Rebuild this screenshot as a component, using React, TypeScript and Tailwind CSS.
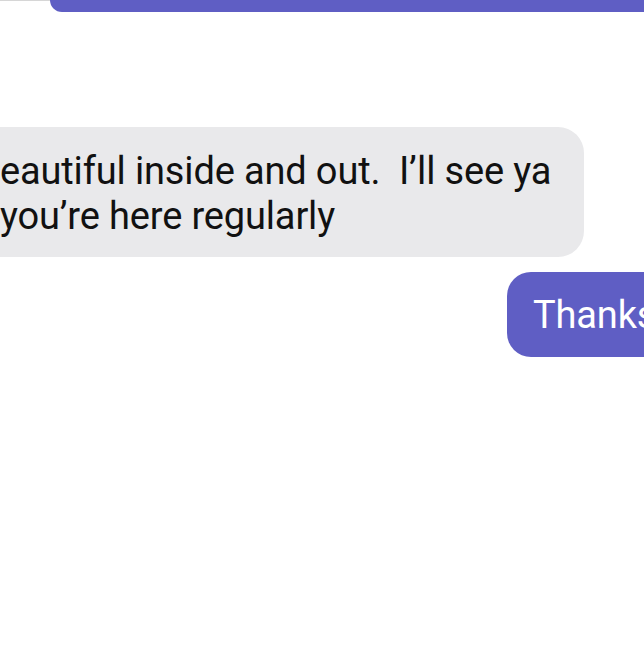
export default function App() {
  return (
    <div
      className="relative w-[644px] h-[645px] overflow-hidden bg-white"
      style={{ fontFamily: 'Roboto, "Liberation Sans", sans-serif' }}
    >
      {/* previous outgoing message, cut off at the top */}
      <div className="flex h-[12px]">
        <div className="w-[50px] border-t border-[#d6d6d6]" />
        <div className="flex-1 bg-[#5f5ec4] rounded-bl-[24px]" />
      </div>

      {/* incoming */}
      <div className="mt-[115px] -ml-[40px] w-[624px] h-[130px] rounded-[26px] bg-[#e9e9eb] pt-[22px] pl-[40px]">
        <p className="text-[38px] leading-[45px] tracking-[-0.15px] text-[#111] whitespace-pre">
          {'eautiful inside and out.  I\u2019ll see ya\nyou\u2019re here regularly'}
        </p>
      </div>

      {/* outgoing */}
      <div className="mt-[15px] ml-[507px] h-[85px] rounded-l-[24px] bg-[#5f5ec4] pl-[26px] pt-[21px]">
        <p className="text-[38px] leading-[45px] tracking-[-0.15px] text-white whitespace-pre">Thanks</p>
      </div>
    </div>
  )
}
